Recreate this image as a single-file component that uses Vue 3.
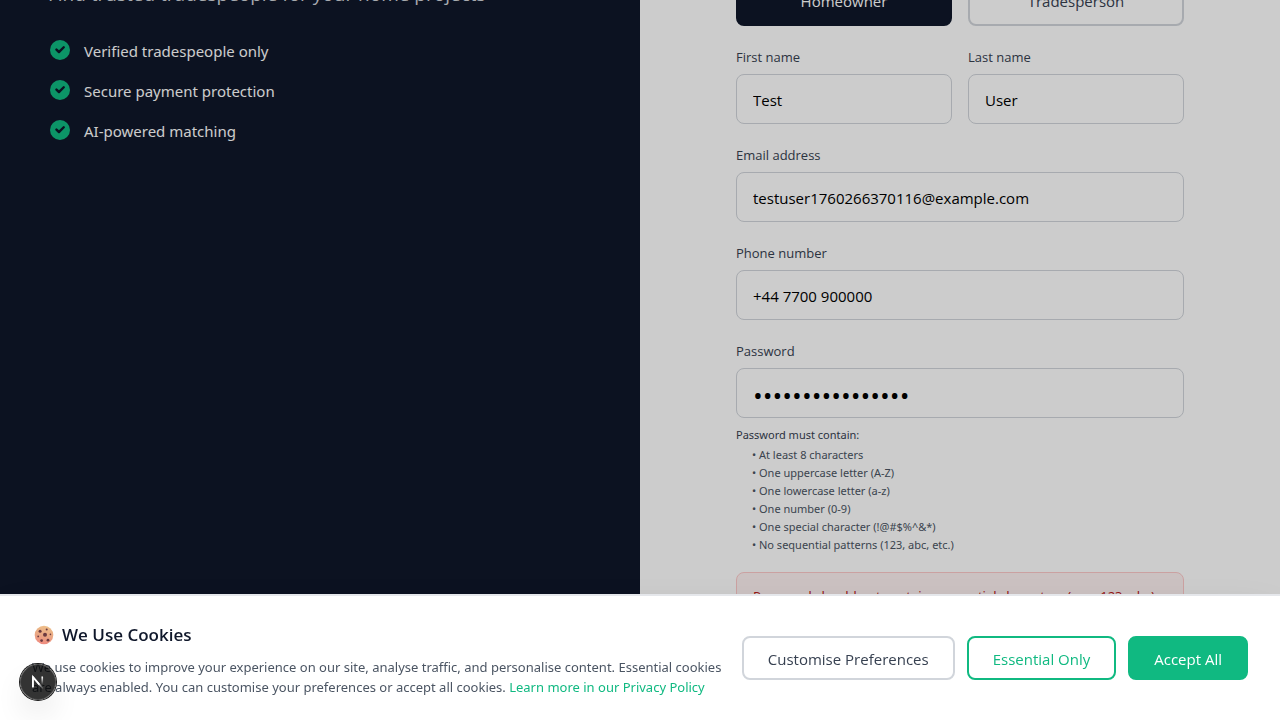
<script setup>
import { ref } from 'vue'

const benefits = ['Verified tradespeople only', 'Secure payment protection', 'AI-powered matching']
const rules = [
  'At least 8 characters',
  'One uppercase letter (A-Z)',
  'One lowercase letter (a-z)',
  'One number (0-9)',
  'One special character (!@#$%^&*)',
  'No sequential patterns (123, abc, etc.)',
]
const role = ref('homeowner')
const firstName = ref('Test')
const lastName = ref('User')
const email = ref('testuser1760266370116@example.com')
const phone = ref('+44 7700 900000')
const password = ref('Password12345678')
</script>

<template>
  <div class="page">
    <aside class="intro">
      <p class="tagline">Find trusted tradespeople for your home projects</p>
      <ul class="benefits">
        <li v-for="item in benefits" :key="item">
          <svg class="check" viewBox="0 0 20 20" aria-hidden="true">
            <path
              fill="currentColor"
              fill-rule="evenodd"
              d="M10 0a10 10 0 1 0 0 20a10 10 0 0 0 0-20zM14.6 8.1a1.2 1.2 0 0 0-1.7-1.7L9 10.3L7.3 8.7a1.2 1.2 0 0 0-1.7 1.7l2.5 2.5a1.2 1.2 0 0 0 1.7 0z"
            />
          </svg>
          <span>{{ item }}</span>
        </li>
      </ul>
    </aside>

    <main class="panel">
      <form class="form" @submit.prevent>
        <div class="pair roles">
          <button type="button" class="role" :class="{ active: role === 'homeowner' }" @click="role = 'homeowner'">Homeowner</button>
          <button type="button" class="role" :class="{ active: role === 'tradesperson' }" @click="role = 'tradesperson'">Tradesperson</button>
        </div>
        <div class="pair">
          <div class="field">
            <label for="first">First name</label>
            <input id="first" v-model="firstName" type="text" />
          </div>
          <div class="field">
            <label for="last">Last name</label>
            <input id="last" v-model="lastName" type="text" />
          </div>
        </div>
        <div class="field">
          <label for="email">Email address</label>
          <input id="email" v-model="email" type="email" />
        </div>
        <div class="field">
          <label for="phone">Phone number</label>
          <input id="phone" v-model="phone" type="tel" />
        </div>
        <div class="field">
          <label for="password">Password</label>
          <input id="password" v-model="password" class="secret" type="password" />
          <div class="hint">
            <p>Password must contain:</p>
            <ul>
              <li v-for="rule in rules" :key="rule">• {{ rule }}</li>
            </ul>
          </div>
        </div>
        <div class="alert" role="alert">Password should not contain sequential characters (e.g., 123, abc)</div>
      </form>
    </main>
  </div>

  <div class="backdrop"></div>

  <section class="cookies" aria-labelledby="cookie-title">
    <div class="message">
      <h2 id="cookie-title">
        <svg class="cookie" viewBox="0 0 20 20" aria-hidden="true">
          <defs>
            <linearGradient id="dough" x1="0.6" y1="0" x2="0.4" y2="1">
              <stop offset="0" stop-color="#eec08a" />
              <stop offset="0.55" stop-color="#e9a583" />
              <stop offset="1" stop-color="#f08a80" />
            </linearGradient>
          </defs>
          <circle cx="10" cy="10" r="9.3" fill="url(#dough)" />
          <g fill="#6b3a40">
            <circle cx="6.1" cy="6.2" r="1.5" />
            <circle cx="12.7" cy="4.4" r="1" />
            <circle cx="11" cy="9.8" r="2" />
            <circle cx="4.2" cy="11.4" r="0.9" />
            <circle cx="16.4" cy="9.4" r="0.8" />
            <circle cx="7.6" cy="15.6" r="1.4" />
            <circle cx="14" cy="15.2" r="1.4" />
          </g>
        </svg>
        <span>We Use Cookies</span>
      </h2>
      <p>
        We use cookies to improve your experience on our site, analyse traffic, and personalise content. Essential cookies are always enabled. You can customise your preferences or accept all cookies.
        <a href="#privacy">Learn more in our Privacy Policy</a>
      </p>
    </div>
    <div class="actions">
      <button type="button" class="btn neutral">Customise Preferences</button>
      <button type="button" class="btn outline">Essential Only</button>
      <button type="button" class="btn solid">Accept All</button>
    </div>
  </section>

  <button type="button" class="devtools" aria-label="Open developer tools">
    <svg viewBox="0 0 40 40" fill="none" aria-hidden="true">
      <defs>
        <linearGradient id="fade-diagonal" x1="21" y1="20" x2="27" y2="28" gradientUnits="userSpaceOnUse">
          <stop stop-color="#fff" />
          <stop offset="1" stop-color="#fff" stop-opacity="0" />
        </linearGradient>
        <linearGradient id="fade-stem" x1="25" y1="14" x2="25" y2="23" gradientUnits="userSpaceOnUse">
          <stop stop-color="#fff" />
          <stop offset="1" stop-color="#fff" stop-opacity="0" />
        </linearGradient>
      </defs>
      <path d="M14 26V14L26 28" stroke="url(#fade-diagonal)" stroke-width="1.9" />
      <path d="M14 26.5V13.5" stroke="#fff" stroke-width="1.9" />
      <path d="M14 14L21.5 23" stroke="#fff" stroke-width="1.9" />
      <path d="M25 13.5V23" stroke="url(#fade-stem)" stroke-width="1.9" />
    </svg>
  </button>
</template>

<style>
body {
  margin: 0;
  overflow: hidden;
}
</style>

<style scoped>
.page,
.cookies {
  font-family: "Open Sans", "Noto Sans", sans-serif;
}
.page *,
.cookies,
.cookies *,
.devtools {
  box-sizing: border-box;
}
p,
h2,
ul {
  margin: 0;
  padding: 0;
}
ul {
  list-style: none;
}
.page {
  display: grid;
  grid-template-columns: 1fr 1fr;
  height: 100vh;
  overflow: hidden;
}
.intro {
  padding: 0 48px;
  background: #0f172a;
}
.tagline {
  margin-top: -20px;
  font-size: 19px;
  line-height: 28px;
  color: #d1d5db;
}
.benefits {
  display: flex;
  flex-direction: column;
  gap: 16px;
  margin-top: 30px;
  font-family: "Noto Sans", "Open Sans", sans-serif;
  font-size: 15px;
  line-height: 24px;
  color: #fff;
}
.benefits li {
  display: flex;
  align-items: center;
  gap: 12px;
}
.benefits span {
  padding-top: 2px;
  line-height: 22px;
}
.check {
  width: 20px;
  height: 20px;
  margin: 0 2px;
}
.check {
  color: #10b981;
}
.panel {
  display: flex;
  justify-content: center;
  background: #fff;
}
.form {
  display: flex;
  flex-direction: column;
  gap: 20px;
  width: 100%;
  max-width: 448px;
  margin-top: -24px;
}
.pair {
  display: grid;
  grid-template-columns: 1fr 1fr;
  gap: 16px;
}
.role {
  height: 50px;
  border: 2px solid #d1d5db;
  border-radius: 8px;
  background: #fff;
  color: #374151;
  font-family: inherit;
  font-size: 15px;
}
.role.active {
  border-color: #0f172a;
  background: #0f172a;
  color: #fff;
}
.field label {
  display: block;
  margin-bottom: 6px;
  font-size: 13px;
  line-height: 22px;
  color: #374151;
}
.field input {
  display: block;
  width: 100%;
  height: 50px;
  padding: 14px 16px 12px;
  border: 1px solid #d1d5db;
  border-radius: 8px;
  background: #fff;
  color: #000;
  font-family: inherit;
  font-size: 15px;
}
.field .secret {
  padding-top: 12px;
  padding-bottom: 8px;
  font-size: 26px;
}
.hint {
  margin: 9px 0 -1px;
  font-family: "Noto Sans", "Open Sans", sans-serif;
  font-size: 11px;
  line-height: 16px;
  color: #374151;
}
.hint ul {
  display: flex;
  flex-direction: column;
  gap: 2px;
  margin-top: 4px;
  padding-left: 16px;
  color: #4b5563;
}
.alert {
  padding: 13px 16px;
  border: 1px solid #fecaca;
  border-radius: 8px;
  background: #fef2f2;
  color: #b91c1c;
  font-family: "Noto Sans", "Open Sans", sans-serif;
  font-size: 13px;
  line-height: 20px;
}
.backdrop {
  position: fixed;
  inset: 0;
  background: rgba(0, 0, 0, 0.2);
}
.cookies {
  position: fixed;
  right: 0;
  bottom: 0;
  left: 0;
  display: flex;
  align-items: center;
  gap: 12px;
  padding: 24px 32px;
  border-top: 2px solid #e5e7eb;
  background: #fff;
  box-shadow: 0 25px 50px -12px rgba(0, 0, 0, 0.25);
}
.message {
  flex: 1;
  min-width: 0;
  margin: 1px 0 -1px;
}
.message h2 {
  display: flex;
  align-items: center;
  gap: 8px;
  margin-bottom: 8px;
  font-size: 17px;
  font-weight: 600;
  line-height: 28px;
  color: #0f172a;
}
.cookie {
  width: 20px;
  height: 20px;
  margin-left: 2px;
}
.message p {
  font-family: "Noto Sans", "Open Sans", sans-serif;
  font-size: 13px;
  line-height: 20px;
  color: #4b5563;
}
.message a {
  color: #10b981;
  text-decoration: none;
}
.actions {
  display: flex;
  gap: 12px;
}
.btn {
  height: 44px;
  padding: 2px 24px 0;
  border: 2px solid;
  border-radius: 8px;
  background: #fff;
  font-family: inherit;
  font-size: 15px;
  white-space: nowrap;
}
.neutral {
  border-color: #d1d5db;
  color: #374151;
}
.outline {
  border-color: #10b981;
  color: #10b981;
}
.solid {
  border-color: #10b981;
  background: #10b981;
  color: #fff;
}
.devtools {
  position: fixed;
  bottom: 20px;
  left: 20px;
  width: 36px;
  height: 36px;
  padding: 0;
  border: 1px solid #4a4a4a;
  border-radius: 50%;
  background: rgba(0, 0, 0, 0.8);
  box-shadow: 0 0 0 1px #171717, 0 16px 32px -8px rgba(0, 0, 0, 0.24);
}
.devtools svg {
  display: block;
  width: 100%;
}
</style>
